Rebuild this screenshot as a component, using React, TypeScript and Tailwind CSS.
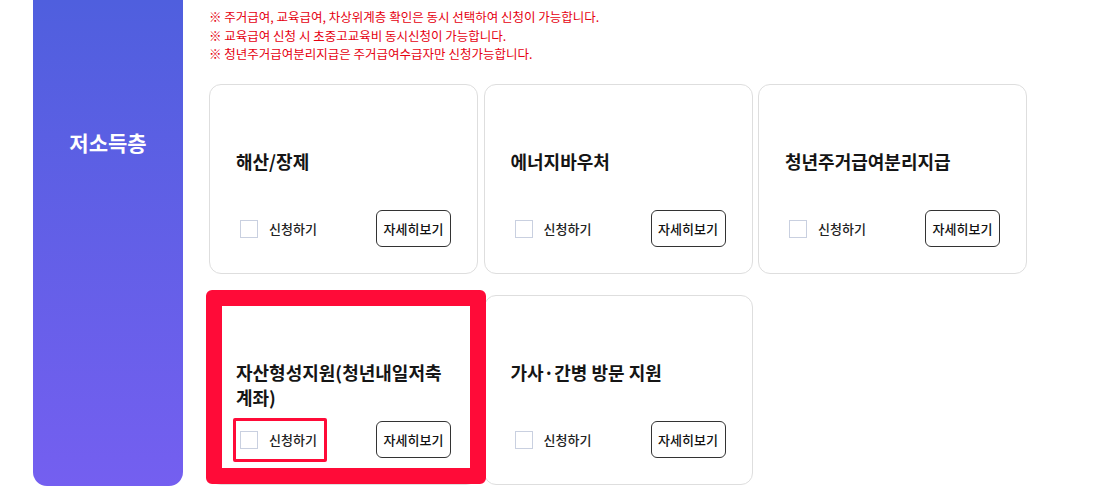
import React from "react";

const notes = [
  "※ 주거급여, 교육급여, 차상위계층 확인은 동시 선택하여 신청이 가능합니다.",
  "※ 교육급여 신청 시 초중고교육비 동시신청이 가능합니다.",
  "※ 청년주거급여분리지급은 주거급여수급자만 신청가능합니다.",
];

const items = [
  { title: "해산/장제" },
  { title: "에너지바우처" },
  { title: "청년주거급여분리지급" },
  { title: "자산형성지원(청년내일저축계좌)", marked: true },
  { title: "가사·간병 방문 지원" },
];

function ServiceCard({ title, marked }: { title: string; marked?: boolean }) {
  return (
    <div className="relative flex h-[190px] flex-col rounded-[12px] border border-[#dedede] bg-white pt-[64px] pb-[26px]">
      <div className="pl-[26px] pr-[20px] text-[18px] leading-[25px] font-bold text-[#151515]">
        {title}
      </div>
      <div className="mt-auto flex items-center justify-between pl-[30px] pr-[26px]">
        <label className="flex items-center gap-[11px]">
          <span className="h-[18px] w-[18px] border border-[#c9d0e0] bg-white" />
          <span className="text-[13px] font-medium text-[#222]">신청하기</span>
        </label>
        <button className="h-[37px] w-[75px] rounded-[6px] border border-[#333] bg-white text-[13px] font-medium text-[#111]">
          자세히보기
        </button>
      </div>
      {marked && (
        <>
          <div className="pointer-events-none absolute top-[-6px] left-[-4px] z-10 h-[194px] w-[280px] rounded-[6px] border-[16px] border-[#ff0b38]" />
          <div className="pointer-events-none absolute top-[122px] left-[23px] z-10 h-[44px] w-[94px] rounded-[2px] border-[3px] border-[#ff0b38]" />
        </>
      )}
    </div>
  );
}

export default function App() {
  return (
    <div
      className="flex h-[491px] w-[1108px] overflow-hidden bg-white"
      style={{ fontFamily: '"Noto Sans CJK KR", "Noto Sans", sans-serif' }}
    >
      <div className="ml-[33px] h-[486px] w-[150px] shrink-0 rounded-b-[14px] bg-linear-to-b from-[#4f5fde] to-[#745ff0] pt-[128px] text-center text-[21px] leading-[28px] font-bold text-white">
        저소득층
      </div>
      <div className="ml-[26px] pt-[8px]">
        <div className="text-[12.5px] leading-[18.5px] text-[#e5000f]">
          {notes.map((n) => (
            <p key={n}>{n}</p>
          ))}
        </div>
        <div className="mt-[20.5px] grid grid-cols-[269px_269px_269px] gap-x-[5.5px] gap-y-[21px]">
          {items.map((it) => (
            <ServiceCard key={it.title} title={it.title} marked={it.marked} />
          ))}
        </div>
      </div>
    </div>
  );
}
